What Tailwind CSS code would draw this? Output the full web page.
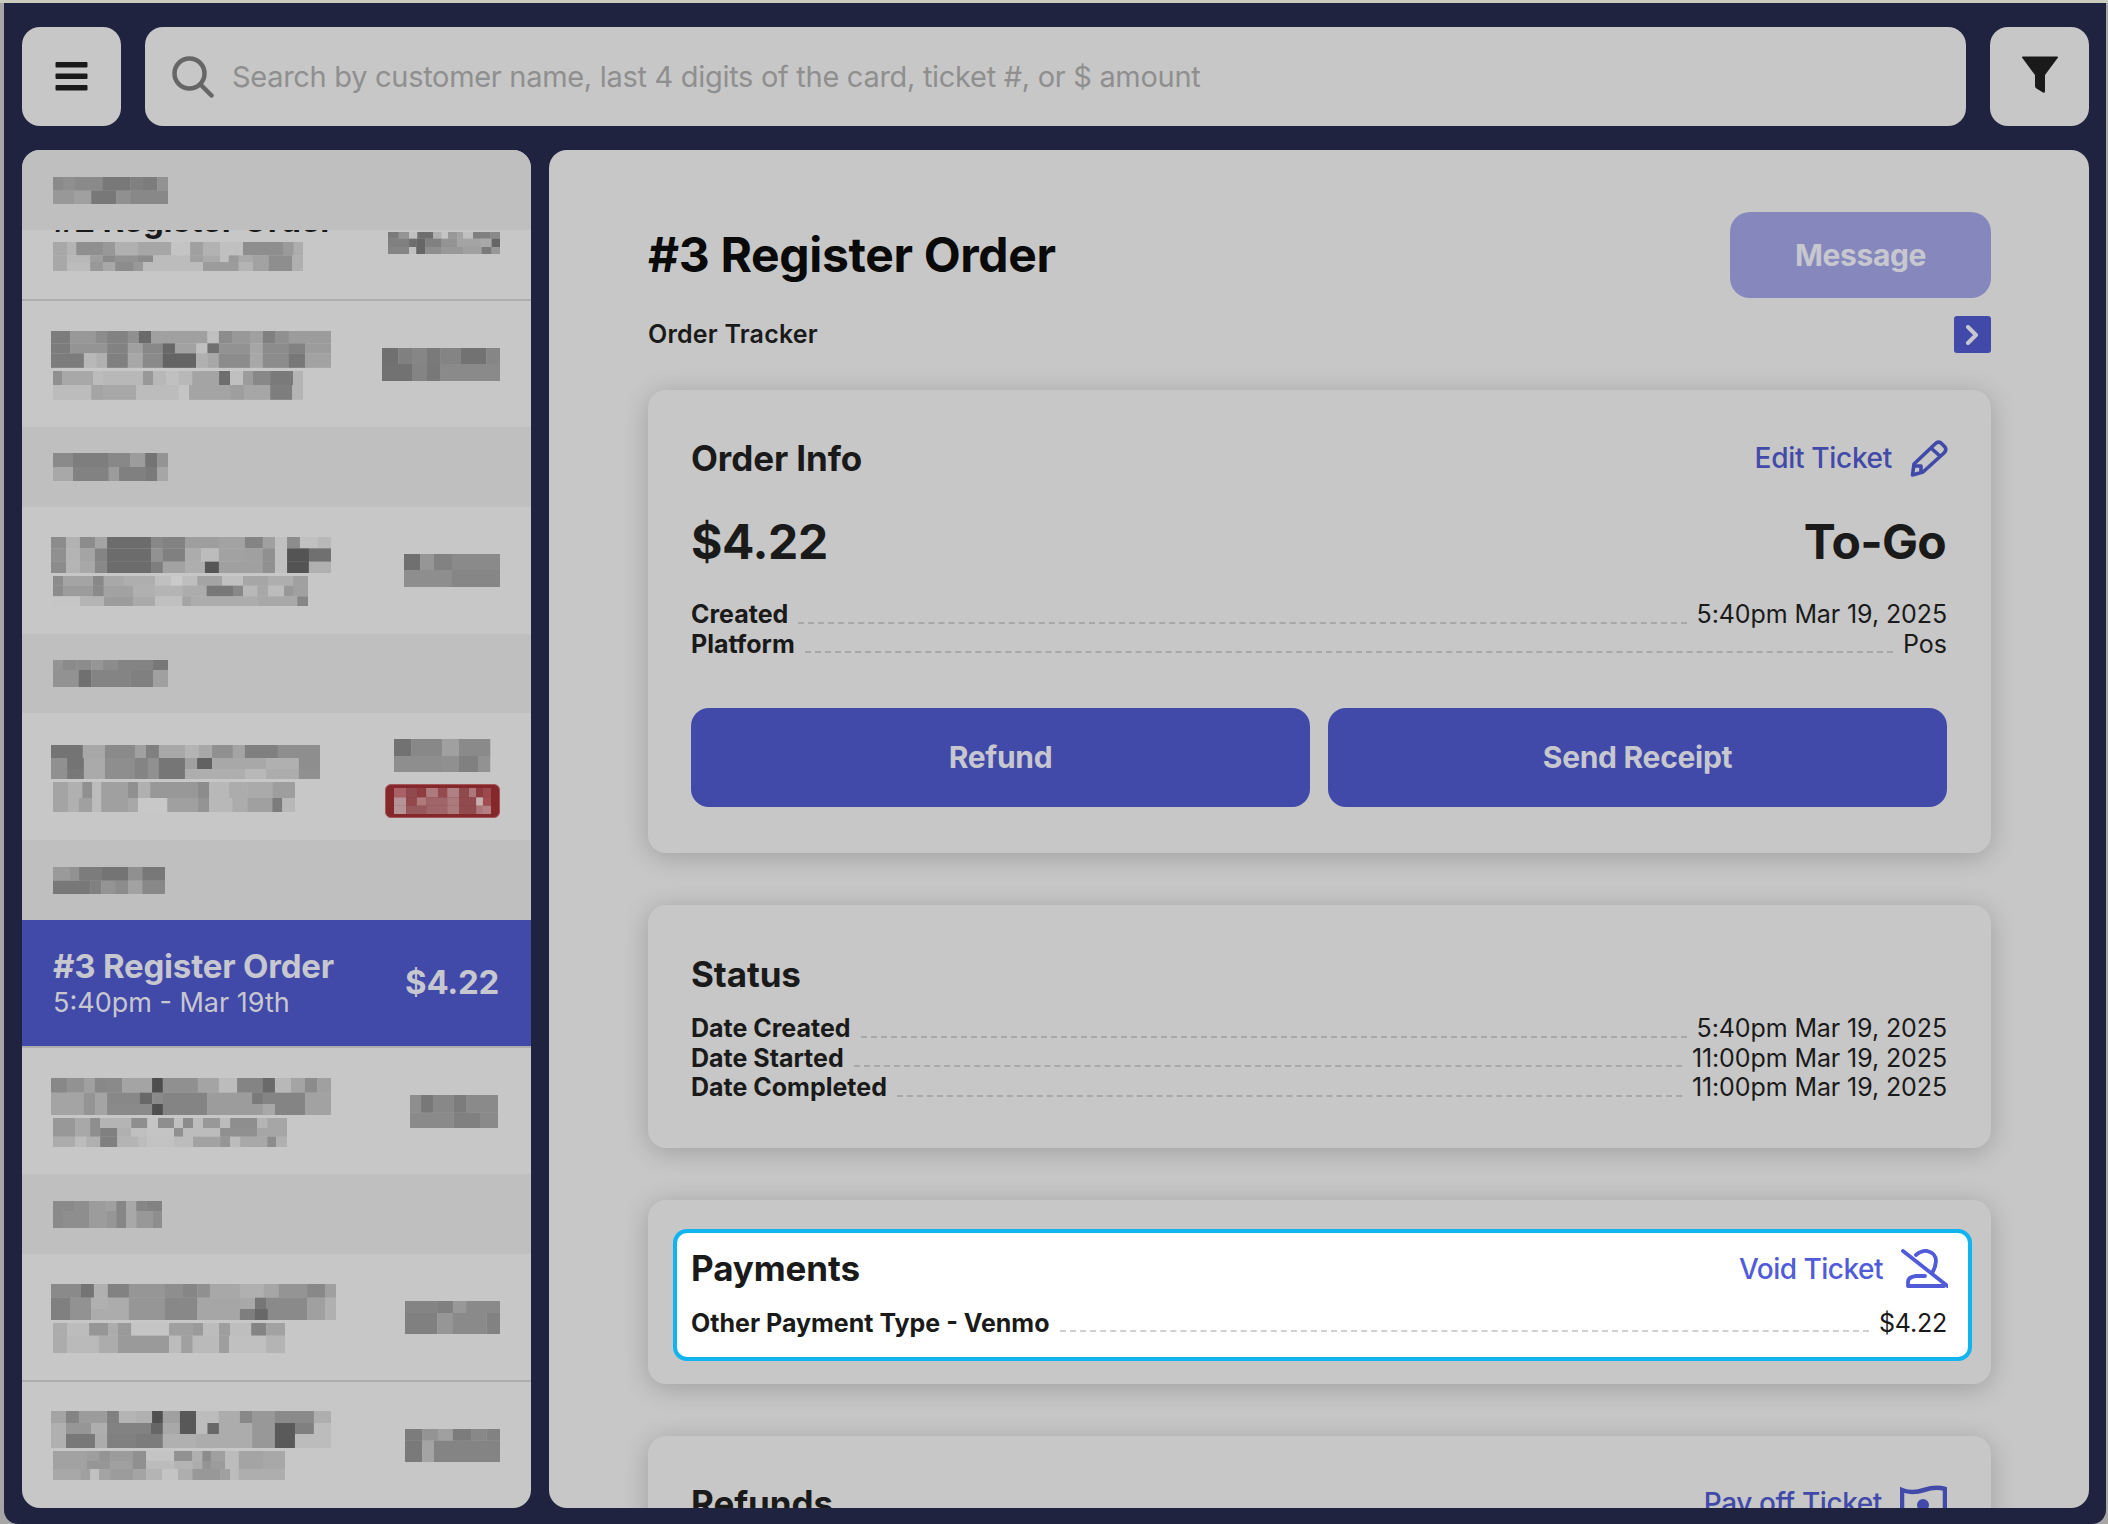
<!DOCTYPE html>
<html lang="en">
<head>
<meta charset="utf-8">
<title>Order</title>
<script src="https://cdn.jsdelivr.net/npm/@tailwindcss/browser@4"></script>
</head>
<body class="bg-[#a6a6a6] font-['Inter','Liberation_Sans',sans-serif] overflow-hidden">
<div class="h-[3px] bg-[#c9ccbf]"></div>
<div class="ml-[4px] mr-[2px] h-[1521px] bg-[#1f2340] rounded-bl-[14px] rounded-br-[14px] pt-[24px] pb-[16px] pl-[18px] pr-[17px] flex flex-col gap-[24px]">
  <!-- top bar -->
  <div class="flex gap-[24px] h-[99px] shrink-0">
    <button class="w-[99px] bg-[#c7c7c7] rounded-[18px] flex items-center justify-center">
      <svg width="33" height="29" viewBox="0 0 33 29" fill="#1a1a1a"><rect x="0.5" y="0" width="32" height="5.500" rx="1"/><rect x="0.5" y="11.500" width="32" height="5.500" rx="1"/><rect x="0.5" y="23" width="32" height="5.500" rx="1"/></svg>
    </button>
    <div class="flex-1 bg-[#c7c7c7] rounded-[18px] flex items-center pl-[27px]">
      <svg width="42" height="42" viewBox="0 0 42 42" fill="none" stroke="#666" stroke-width="4.500" stroke-linecap="round"><circle cx="17.5" cy="17.5" r="15"/><path d="M28.5 28.5 L39.5 39.5"/></svg>
      <span class="ml-[18px] text-[29px] text-[#8f8f8f] tracking-[-0.3px]">Search by customer name, last 4 digits of the card, ticket #, or $ amount</span>
    </div>
    <button class="w-[99px] bg-[#c7c7c7] rounded-[18px] flex items-center justify-center">
      <svg class="-mt-[3px]" width="38" height="38" viewBox="0 0 38 38" fill="#1a1a1a"><path d="M1 1.500 Q0.500 0.500 2 0.500 H36 Q37.500 0.500 37 1.500 L24 19 V35 Q24 37.500 22 36.500 L15.500 32.500 Q14 31.500 14 30 V19 Z"/></svg>
    </button>
  </div>
  <!-- main -->
  <div class="flex-1 min-h-0 flex gap-[18px]">
    <!-- list -->
    <div class="relative w-[509px] shrink-0 bg-[#c7c7c7] rounded-[18px] overflow-hidden pt-[24px]">
      <div class="absolute top-0 left-0 right-0 h-[80px] bg-[#bfbfbf] z-10 flex items-center pl-[31px]"><svg data-m="148 531|572 178:8a 207:8f 286:8a 364:78 400:80 440:7c 470:92|612 207:98 255:a0 325:78 364:90 470:88"></svg></div>

      <div class="h-[127px] border-b-2 border-[#adadad] flex items-center justify-between pl-[31px] pr-[31px]">
        <div class="flex flex-col gap-[3px]">
          <div class="h-[37px] leading-[37px] text-[33px] font-bold tracking-[-0.2px] text-[#1a1a1a]">#2 Register Order</div>
          <svg data-m="148 728|768 188:a8 213:b4 288:8f 322:98 386:b0 479:a6 532:c4 568:a0 616:b2 680:c0 792:8e 822:9a 848:ad|788 188:a8 252:b8 288:9e 322:8a 386:92 428:8c 532:bc 568:a0 616:aa 640:c0 668:9a 708:aa 752:a2 818:8e 848:b0|816 188:a8 252:bc 288:98 322:a8 374:8c 400:98 568:bc 668:9c 708:b4 752:a2 818:8e 848:b0"></svg>
        </div>
        <svg data-m="1086 690|710 1116:7a 1145:94 1168:c0 1212:6e 1236:b0 1254:c4 1280:98 1296:a4 1324:c0 1372:80 1400:8a|735 1145:80 1165:6e 1190:66 1236:80 1280:94 1348:a4 1376:a8 1400:66|758 1145:84 1165:c0 1190:66 1236:8e 1296:98 1348:a0 1376:7a 1400:98" class="mt-[13px]"></svg>
      </div>

      <div class="h-[126px] flex items-center justify-between pl-[31px] pr-[31px]">
        <div class="flex flex-col gap-[3px] mt-[3px]">
          <svg class="-ml-[2px]" data-m="143 993|1030 197:7c 267:98 300:8c 358:82 389:90 423:6a 456:a0 581:a0 613:c0 650:8c 700:98 736:a0 770:80 809:90 927:9c|1060 197:7c 300:94 358:82 400:a0 456:88 490:68 550:a2 581:c0 613:70 700:92 736:a6 809:8c 854:82 927:9c|1103 235:7c 270:b8 300:b0 358:80 400:a8 456:8a 549:64 581:b0 613:a8 700:8c 736:a8 809:8c 854:78 927:a2"></svg>
          <svg data-m="148 1113|1155 174:90 260:a8 288:bc 400:b8 428:98 464:b8 500:c0 538:b8 613:a4 644:6e 680:c0 708:9c 756:88 820:7a 848:b4|1199 255:bc 288:a4 381:a8 500:bc 529:c4 644:a4 683:9e 756:a6 818:7e 848:b4"></svg>
        </div>
        <svg data-m="1070 1044|1092 1116:70 1154:80 1196:86 1234:7a 1290:84 1362:72 1400:86|1143 1154:72 1196:84 1234:78 1400:8a"></svg>
      </div>

      <div class="h-[80px] bg-[#bfbfbf] flex items-center pl-[31px]"><svg data-m="148 1362|1404 204:8a 304:7e 364:88 406:9c 440:74 470:94|1446 204:a8 304:82 333:9c 406:80 440:7a 470:a6"></svg></div>

      <div class="h-[127px] flex items-center justify-between pl-[31px] pr-[31px]">
        <div class="flex flex-col gap-[3px] mt-[1px]">
          <svg class="-ml-[2px]" data-m="143 114|148 185:8c 224:b2 266:8c 300:a4 423:6c 456:88 518:82 613:9e 686:a2 736:84 770:a0 804:c0 840:8c 890:c0 927:b8|188 185:90 224:b4 266:a4 300:84 423:6c 456:92 518:80 563:ac 613:bc 686:a2 736:a0 770:90 804:c0 865:54 927:70|222 185:8c 224:b4 266:a8 300:88 423:6c 456:7e 518:a2 574:ae 613:56 686:a0 736:a0 770:90 804:c0 865:54 927:b0"></svg>
          <svg data-m="148 231|260 176:8c 260:a4 290:88 346:a8 434:ae 479:c0 510:ca 552:be 622:a4 680:c0 750:a6 820:ae 862:a0|292 176:8c 260:9c 290:8a 372:a2 434:b0 510:b4 578:ac 652:78 680:88 720:b8 750:a8 795:bc 820:98 862:a0|321 224:c6 291:b4 372:9c 434:aa 510:c0 534:a4 720:ac 832:a8 862:86"></svg>
        </div>
        <svg data-m="1131 162|210 1176:70 1215:96 1265:82 1400:8a|261 1265:8e 1400:86"></svg>
      </div>

      <div class="h-[79px] bg-[#bfbfbf] flex items-center pl-[31px]"><svg data-m="148 483|513 176:94 213:8a 255:8c 287:96 330:8c 428:84 470:78|564 220:92 255:70 364:84 428:80 470:a0"></svg></div>

      <div class="h-[127px] flex items-center justify-between pl-[31px] pr-[31px]">
        <div class="flex flex-col gap-[3px] mt-[3px]">
          <svg class="-ml-[2px]" data-m="143 738|777 232:74 294:a8 378:8a 409:a0 445:80 518:a8 557:b4 594:a8 652:90 686:a4 778:80 896:8e|810 188:90 235:74 294:aa 378:8e 414:84 445:90 518:76 552:a0 594:62 652:a8 745:a8 837:b0 896:8e|840 188:90 235:78 294:aa 378:8e 414:84 445:90 518:76 686:ae 745:b8 837:ac 896:90"></svg>
          <svg data-m="148 849|897 190:a4 230:b0 258:90 283:bc 358:a0 386:90 420:b0 554:98 585:8c 641:b8 692:ac 762:aa 826:9e|939 190:a4 220:b0 258:a0 283:bc 358:a0 386:a8 468:c8 554:a0 585:94 650:b8 692:ac 762:a0 790:7c 826:b8"></svg>
        </div>
        <div class="flex flex-col items-center gap-[12px] mt-[3px]">
          <svg data-m="1103 717|768 1151:72 1237:88 1285:a0 1372:8a|816 1237:8e 1285:90 1338:80 1372:92"></svg>
          <div class="w-[115px] h-[34px] bg-[#85282b] rounded-[6px] border border-[#a65458] flex items-center justify-center">
            <svg data-m="1103 862|890 1137:a96066 1167:904a4e 1193:8e3c40 1226:ad7b7d 1252:944c50 1285:b08085 1313:8f4a4e 1333:ad7678 1352:8c3c40 1375:9c484c|915 1137:b69396 1167:94484c 1193:b07a7c 1252:a06568 1285:ab7a7d 1333:914a4e 1352:c8b0b0 1375:a04c50|940 1137:b69396 1193:96585a 1252:a06568 1285:ab7a7d 1333:914a4e 1352:ad7678 1375:b58083"></svg>
          </div>
        </div>
      </div>

      <div class="h-[80px] bg-[#bfbfbf] flex items-center pl-[31px]"><svg data-m="148 1101|1142 195:9a 221:92 283:7c 358:74 398:90 462:78|1182 252:78 283:80 322:94 358:8c 398:a2 462:88"></svg></div>

      <!-- selected -->
      <div class="h-[128px] bg-[#414aa9] border-b-2 border-[#adadad] flex items-center justify-between pl-[31px] pr-[32px] text-[#c7c7cf]">
        <div class="flex flex-col gap-[3px] -mt-[1px]">
          <div class="h-[37px] leading-[37px] text-[33px] font-bold tracking-[-0.2px]">#3 Register Order</div>
          <div class="h-[29px] leading-[29px] text-[27px]">5:40pm - Mar 19th</div>
        </div>
        <div class="text-[33px] font-bold tracking-[-0.3px]">$4.22</div>
      </div>

      <div class="h-[126px] flex items-center justify-between pl-[31px] pr-[33px]">
        <div class="flex flex-col gap-[3px] mt-[2px]">
          <svg class="-ml-[2px]" data-m="143 204|248 188:88 235:92 266:a0 300:88 342:8a 426:a4 456:4e 554:90 613:a4 664:bc 736:84 770:6a 815:b8 854:a4 888:8c 927:a0|282 235:a4 266:94 300:a4 392:88 426:68 456:8a 580:84 706:9c 736:7a 770:84 854:84 927:a2|315 235:a4 266:94 300:a4 426:8a 456:4e 580:84 736:9c 770:a8 854:84 927:a2"></svg>
          <svg data-m="148 324|354 210:98 252:a8 280:8e 367:b4 412:8e 442:c4 487:8e 512:c0 540:8c 568:bc 616:98 644:bc 720:8e 748:b4 804:a6|380 210:98 252:a8 280:8e 328:80 367:b0 412:c0 487:c4 512:90 540:bc 616:bc 720:90 804:a6|411 210:ac 241:bc 280:b0 328:80 386:b4 412:bc 487:c2 540:bc 616:a2 644:96 672:bc 748:a8 773:8c 804:b0"></svg>
        </div>
        <svg data-m="1148 255|308 1179:8e 1212:78 1270:88 1305:7c 1394:8a|354 1270:8a 1344:80 1394:8a"></svg>
      </div>

      <div class="h-[80px] bg-[#bfbfbf] flex items-center pl-[31px]"><svg data-m="148 573|603 207:8a 249:8e 297:9c 325:a0 353:86 381:a8 409:86 454:82|654 176:8a 249:8e 297:9c 325:96 353:86 381:a8 427:98 454:8e"></svg></div>

      <div class="h-[128px] border-b-2 border-[#adadad] flex items-center justify-between pl-[31px] pr-[31px]">
        <div class="flex flex-col gap-[3px] mt-[2px]">
          <svg class="-ml-[2px]" data-m="143 825|866 227:8a 263:74 302:b0 361:82 462:96 512:8e 553:86 588:90 672:a8 739:b0 781:a6 860:94 910:88 941:a0|900 196:80 255:92 302:b0 361:ac 462:96 553:88 672:a6 714:a8 745:76 860:8a 910:a0 941:b0|933 196:80 255:92 361:ac 462:96 553:88 672:a6 714:7e 750:68 860:8a 910:a0 941:b0"></svg>
          <svg data-m="148 942|980 188:ac 249:bc 302:96 330:ac 367:9a 473:c4 539:a0 568:9a 613:bc 644:9e 703:be 745:84 798:a2|1032 188:ac 277:ba 330:ac 473:9a 507:bc 539:a0 613:ba 641:9e 745:c0 798:b4"></svg>
        </div>
        <svg data-m="1134 873|909 1224:84 1268:80 1305:98 1400:8a|972 1224:80 1268:96 1362:8a 1400:82"></svg>
      </div>

      <div class="h-[126px] flex items-center justify-between pl-[31px] pr-[31px]">
        <div class="flex flex-col gap-[3px]">
          <svg class="-ml-[2px]" data-m="143 1206|1242 185:a4 221:84 300:9c 333:80 381:b4 426:b0 456:50 504:a0 549:58 613:bc 672:ac 706:88 770:98 879:8a 927:ae|1275 185:b0 255:96 300:ae 423:82 456:66 504:a8 549:58 581:bc 613:68 706:ac 770:98 826:5a 879:80 927:bc|1317 185:b0 266:78 300:ac 381:80 456:7c 549:b0 706:ac 770:98 826:5a 927:bc"></svg>
          <svg data-m="148 1326|1356 243:a2 277:9e 308:94 370:9c 409:90 487:c4 538:92 566:b0 590:8c 630:a0 668:bc 738:a4 798:a8|1380 243:a2 308:96 370:a0 409:90 487:bc 538:b4 566:ac 590:94 630:9c 668:bc 738:a4 798:a8|1413 224:a8 252:a0 277:c0 308:a4 372:9c 409:a4 454:b4 498:c4 538:ae 616:98 644:a0 668:bc 798:ae"></svg>
        </div>
        <svg data-m="1134 1257|1292 1182:7c 1226:94 1268:a0 1319:7c 1362:88 1400:82|1356 1182:7a 1215:a4 1268:84 1400:84"></svg>
      </div>
    </div>

    <!-- detail -->
    <div class="flex-1 min-w-0 bg-[#c7c7c7] rounded-[18px] overflow-hidden pt-[62px] pl-[99px] pr-[98px] text-[#1a1a1a]">
      <div class="flex items-center justify-between h-[86px]">
        <h1 class="text-[48px] font-bold tracking-[-0.35px] text-[#0a0a0a]">#3 Register Order</h1>
        <button class="w-[261px] h-[86px] bg-[#8688bd] rounded-[20px] text-[30px] font-bold tracking-[-0.4px] text-[#c7c7cf]">Message</button>
      </div>
      <div class="mt-[18px] flex items-center justify-between h-[37px]">
        <span class="text-[25px] font-semibold tracking-[0.2px]">Order Tracker</span>
        <button class="w-[37px] h-[37px] bg-[#414aa9] rounded-[3px] flex items-center justify-center">
          <svg width="15" height="20" viewBox="0 0 15 20" fill="none" stroke="#c7c7cf" stroke-width="4" stroke-linecap="round" stroke-linejoin="round"><path d="M3 2 L11 10 L3 18"/></svg>
        </button>
      </div>

      <section class="mt-[37px] rounded-[18px] bg-[#c7c7c7] shadow-[0_4px_26px_rgba(0,0,0,0.2)] pt-[48px] pb-[46px] pl-[43px] pr-[44px]">
        <div class="flex items-center justify-between h-[40px]">
          <h2 class="text-[35px] font-bold tracking-[-0.1px]">Order Info</h2>
          <a class="flex items-center gap-[18px] text-[28px] font-medium tracking-[-0.3px] text-[#414aa9]">Edit Ticket
            <svg width="38" height="38" viewBox="0 0 38 38" fill="none" stroke="#414aa9" stroke-width="3.600" stroke-linejoin="round" class="-mr-[1px]"><path d="M25 5 Q28 2 31 4 L35 8 Q37 11 34 14 L13 33 L2.500 36 L4 25 Z"/><path d="M21 9 L31 18"/><path d="M4.500 27 L11 27 L11 33"/></svg>
          </a>
        </div>
        <div class="mt-[35px] flex items-center justify-between h-[58px] text-[48px] font-bold tracking-[-0.4px]">
          <span>$4.22</span><span class="mr-[1px] tracking-[-0.7px]">To-Go</span>
        </div>
        <div class="mt-[29px] text-[25px] leading-[29.5px]">
          <div class="flex items-end gap-[10px]"><span class="font-bold">Created</span><span class="flex-1 mb-[6px] border-b-2 border-dashed border-[#a8a8a8]"></span><span class="tracking-[-0.1px]">5:40pm Mar 19, 2025</span></div>
          <div class="flex items-end gap-[10px]"><span class="font-bold">Platform</span><span class="flex-1 mb-[6px] border-b-2 border-dashed border-[#a8a8a8]"></span><span>Pos</span></div>
        </div>
        <div class="mt-[49px] flex gap-[18px] text-[30px] font-bold tracking-[-0.3px] text-[#c7c7cf]">
          <button class="flex-1 h-[99px] bg-[#414aa9] rounded-[18px]">Refund</button>
          <button class="flex-1 h-[99px] bg-[#414aa9] rounded-[18px]">Send Receipt</button>
        </div>
      </section>

      <section class="mt-[52px] rounded-[18px] bg-[#c7c7c7] shadow-[0_4px_26px_rgba(0,0,0,0.2)] pt-[49px] pb-[45px] pl-[43px] pr-[44px]">
        <h2 class="h-[40px] leading-[40px] text-[35px] font-bold tracking-[-0.1px]">Status</h2>
        <div class="mt-[20px] text-[25px] leading-[29.5px]">
          <div class="flex items-end gap-[10px]"><span class="font-bold">Date Created</span><span class="flex-1 mb-[6px] border-b-2 border-dashed border-[#a8a8a8]"></span><span class="tracking-[-0.1px]">5:40pm Mar 19, 2025</span></div>
          <div class="flex items-end gap-[10px]"><span class="font-bold">Date Started</span><span class="flex-1 mb-[6px] border-b-2 border-dashed border-[#a8a8a8]"></span><span class="tracking-[-0.1px]">11:00pm Mar 19, 2025</span></div>
          <div class="flex items-end gap-[10px]"><span class="font-bold">Date Completed</span><span class="flex-1 mb-[6px] border-b-2 border-dashed border-[#a8a8a8]"></span><span class="tracking-[-0.1px]">11:00pm Mar 19, 2025</span></div>
        </div>
      </section>

      <section class="mt-[52px] rounded-[18px] bg-[#c7c7c7] shadow-[0_4px_26px_rgba(0,0,0,0.2)] pt-[29px] pb-[23px] pl-[25px] pr-[19px]">
        <div class="bg-white rounded-[14px] border-[4px] border-[#10b4f0] pt-[16px] pb-[19px] pl-[14px] pr-[20px]">
          <div class="flex items-center justify-between h-[40px]">
            <h2 class="text-[35px] font-bold tracking-[-0.1px]">Payments</h2>
            <a class="flex items-center gap-[18px] text-[28px] font-medium tracking-[-0.5px] text-[#4f5bd9]">Void Ticket
              <svg width="47" height="40" viewBox="0 0 47 40" fill="none" stroke="#4f5bd9" stroke-width="3.800" stroke-linecap="round" stroke-linejoin="round"><path d="M2 2 L46.500 37"/><path d="M15 6 Q20 1.500 26 2 Q35 4 35 12 Q34.500 19 31 24"/><path d="M24 27 L15 27 Q7 28 7 33 V37 H43"/></svg>
            </a>
          </div>
          <div class="mt-[20px] text-[25px] leading-[29.5px] flex items-end gap-[10px]"><span class="font-bold">Other Payment Type - Venmo</span><span class="flex-1 mb-[6px] border-b-2 border-dashed border-[#d0d0d0]"></span><span class="mr-[1px] tracking-[-0.2px]">$4.22</span></div>
        </div>
      </section>

      <section class="mt-[52px] rounded-[18px] bg-[#c7c7c7] shadow-[0_4px_26px_rgba(0,0,0,0.2)] pt-[47px] pb-[46px] pl-[43px] pr-[44px]">
        <div class="flex items-center justify-between h-[40px]">
          <h2 class="text-[35px] font-bold tracking-[-0.1px]">Refunds</h2>
          <a class="flex items-center gap-[18px] text-[28px] font-medium tracking-[-0.4px] text-[#414aa9]">Pay off Ticket
            <svg width="47" height="40" viewBox="0 0 47 40" fill="none" stroke="#414aa9" stroke-width="4.500"><path d="M2 7 Q12 11 24 7 Q36 3 45 6 V39 H2 Z"/><circle cx="23" cy="22" r="6" fill="#414aa9" stroke="none"/></svg>
          </a>
        </div>
      </section>
    </div>
  </div>
</div>
<script>
document.querySelectorAll('svg[data-m]').forEach(function (s) {
  var parts = s.getAttribute('data-m').split('|');
  var h = parts[0].split(' ').map(Number), x0 = h[0], y = h[1], y0 = y, xmax = x0, out = '';
  parts.slice(1).forEach(function (r) {
    var t = r.split(' '), yEnd = +t[0], x = x0;
    t.slice(1).forEach(function (seg) {
      var p = seg.split(':'), xe = +p[0], c = p[1];
      if (c.length === 2) c = c + c + c;
      out += '<rect x="' + x + '" y="' + y + '" width="' + (xe - x + 0.5) + '" height="' + (yEnd - y + 0.5) + '" fill="#' + c + '"/>';
      x = xe; if (xe > xmax) xmax = xe;
    });
    y = yEnd;
  });
  s.innerHTML = out;
  s.setAttribute('viewBox', x0 + ' ' + y0 + ' ' + (xmax - x0) + ' ' + (y - y0));
  s.setAttribute('preserveAspectRatio', 'none');
  s.setAttribute('width', (xmax - x0) / 2.8);
  s.setAttribute('height', (y - y0) / 3);
});
</script>
</body>
</html>
